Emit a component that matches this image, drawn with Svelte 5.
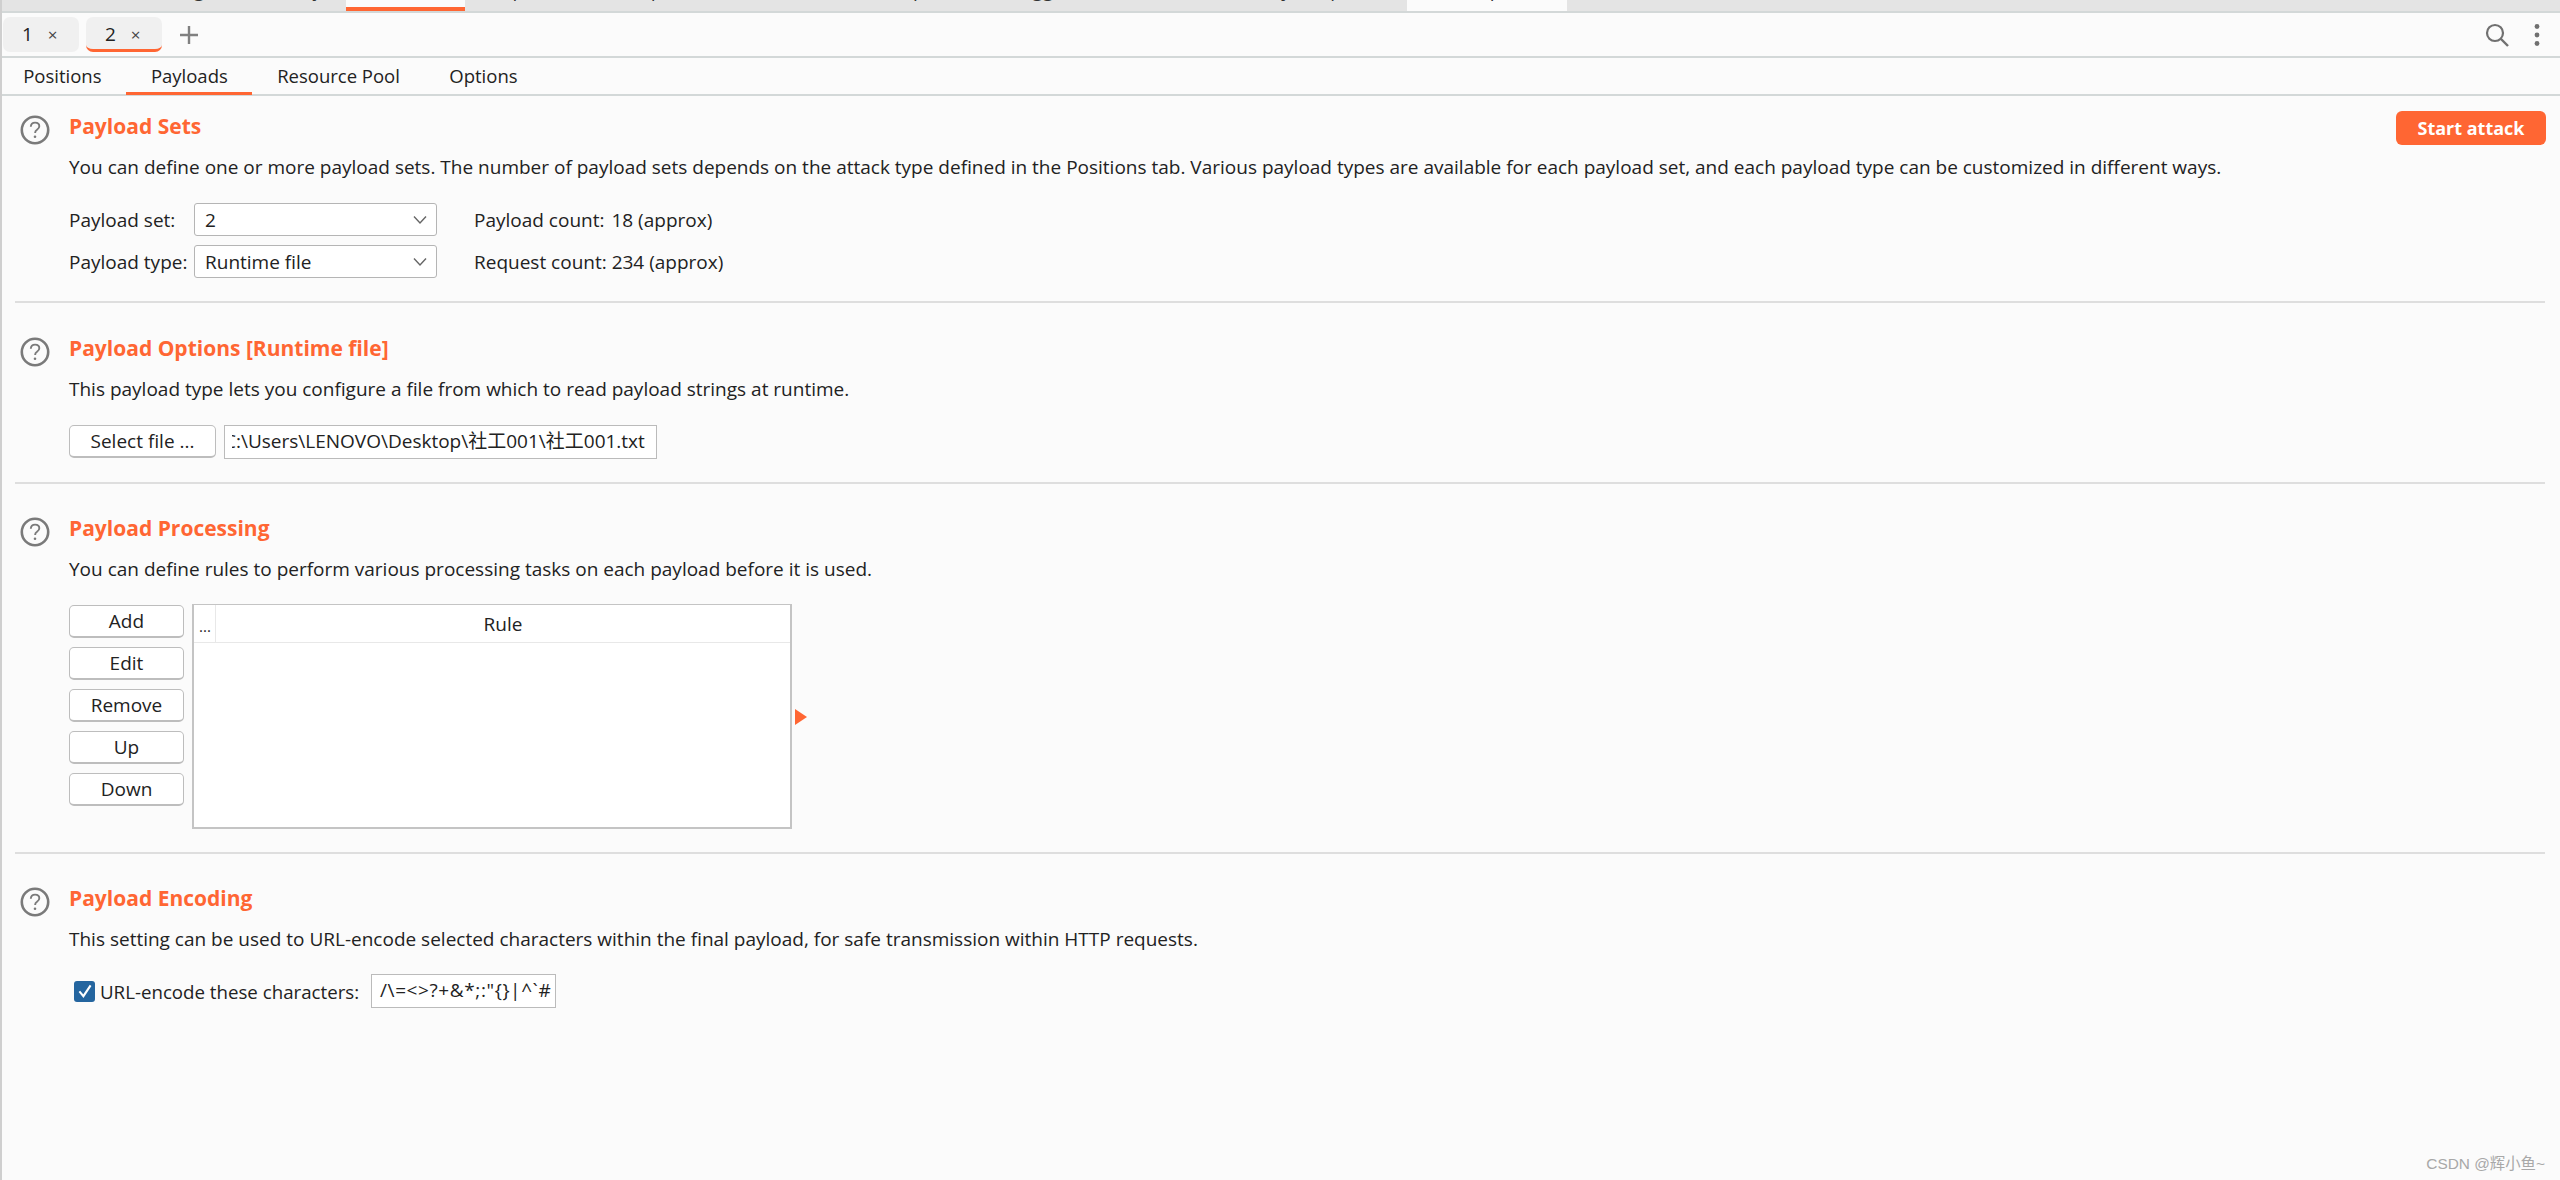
<script>
  const topTabs = [
    { label: 'Dashboard', width: 150, pad: 30 },
    { label: 'Target', width: 105, pad: 15 },
    { label: 'Proxy', width: 91, pad: 17 },
    { label: 'Intruder', width: 119, pad: 26, active: true },
    { label: 'Repeater', width: 130, pad: 25 },
    { label: 'Sequencer', width: 155, pad: 28 },
    { label: 'Decoder', width: 120, pad: 26 },
    { label: 'Comparer', width: 105, pad: 2 },
    { label: 'Logger', width: 150, pad: 36 },
    { label: 'Extender', width: 115, pad: 20 },
    { label: 'Project options', width: 167, pad: 12 },
    { label: 'User options', width: 160, pad: 25, open: true },
    { label: 'Learn', width: 100, pad: 30 }
  ];

  const subTabs = ['Positions', 'Payloads', 'Resource Pool', 'Options'];
  const ruleButtons = ['Add', 'Edit', 'Remove', 'Up', 'Down'];
</script>

{#snippet help()}
  <svg class="help" viewBox="0 0 30 30" width="30" height="30" fill="none">
    <circle cx="15" cy="15" r="13.2" stroke="#7a7a7a" stroke-width="2.6" />
    <path d="M10.8 11.8c.2-2.8 2-4.2 4.3-4.2 2.5 0 4.2 1.5 4.2 3.6 0 1.7-1 2.6-2.3 3.6-1.3.9-1.9 1.6-1.9 3.1" stroke="#7a7a7a" stroke-width="1.9" />
    <circle cx="15" cy="21.8" r="1.3" fill="#7a7a7a" />
  </svg>
{/snippet}

{#snippet chevron()}
  <svg viewBox="0 0 14 10" width="14" height="10" fill="none">
    <path d="M1 1.5l6 6.5 6-6.5" stroke="#666" stroke-width="1.4" />
  </svg>
{/snippet}

<div class="window">
  <nav class="top-tabs">
    {#each topTabs as tab}
      <div class="top-tab" class:active={tab.active} class:open={tab.open} style="width:{tab.width}px;padding-left:{tab.pad}px">
        <span>{tab.label}</span>
      </div>
    {/each}
  </nav>

  <div class="attack-tabs">
    <div class="attack-tab">1 <i>×</i></div>
    <div class="attack-tab current">2 <i>×</i></div>
    <svg class="plus" viewBox="0 0 20 20" width="20" height="20">
      <path d="M10 1v18M1 10h18" stroke="#808080" stroke-width="2.4" />
    </svg>
    <div class="tools">
      <svg viewBox="0 0 24 24" width="24" height="24" fill="none">
        <circle cx="10" cy="10" r="8" stroke="#707070" stroke-width="2.2" />
        <path d="M16 16l7 7" stroke="#707070" stroke-width="2.4" />
      </svg>
      <svg class="dots" viewBox="0 0 6 24" width="6" height="24" fill="#707070">
        <circle cx="3" cy="3.5" r="2.4" />
        <circle cx="3" cy="12" r="2.4" />
        <circle cx="3" cy="20.5" r="2.4" />
      </svg>
    </div>
  </div>

  <div class="sub-tabs">
    {#each subTabs as name, i}
      <div class="sub-tab" class:current={i === 1}>{name}</div>
    {/each}
  </div>

  <main>
    <section class="first">
      {@render help()}
      <div class="body">
        <div class="head">
          <h2>Payload Sets</h2>
          <button class="start">Start attack</button>
        </div>
        <p>You can define one or more payload sets. The number of payload sets depends on the attack type defined in the Positions tab. Various payload types are available for each payload set, and each payload type can be customized in different ways.</p>
        <div class="sets">
          <span>Payload set:</span>
          <div class="combo">2 {@render chevron()}</div>
          <span class="count">Payload count:<span class="gap"></span>18 (approx)</span>
          <span>Payload type:</span>
          <div class="combo">Runtime file {@render chevron()}</div>
          <span class="count">Request count: 234 (approx)</span>
        </div>
      </div>
    </section>

    <section class="options">
      {@render help()}
      <div class="body">
        <h2>Payload Options [Runtime file]</h2>
        <p>This payload type lets you configure a file from which to read payload strings at runtime.</p>
        <div class="file-row">
          <button class="btn select">Select file ...</button>
          <div class="field path"><div class="clip"><span>C:\Users\LENOVO\Desktop\社工001\社工001.txt</span></div></div>
        </div>
      </div>
    </section>

    <section>
      {@render help()}
      <div class="body">
        <h2>Payload Processing</h2>
        <p>You can define rules to perform various processing tasks on each payload before it is used.</p>
        <div class="rules">
          <div class="rule-buttons">
            {#each ruleButtons as name}
              <button class="btn">{name}</button>
            {/each}
          </div>
          <div class="table">
            <div class="thead">
              <div class="col-mark">...</div>
              <div class="col-rule">Rule</div>
            </div>
          </div>
          <div class="arrow"></div>
        </div>
      </div>
    </section>

    <section class="last">
      {@render help()}
      <div class="body">
        <h2>Payload Encoding</h2>
        <p>This setting can be used to URL-encode selected characters within the final payload, for safe transmission within HTTP requests.</p>
        <div class="encode-row">
          <span class="check">
            <svg viewBox="0 0 20 20" width="16" height="16" fill="none">
              <path d="M3 10.5l5 6L17 3" stroke="#fff" stroke-width="2.6" />
            </svg>
          </span>
          <span class="encode-label">URL-encode these characters:</span>
          <div class="field chars">/\=&lt;&gt;?+&amp;*;:"{'{'}{'}'}|^`#</div>
        </div>
      </div>
    </section>
  </main>

  <div class="mark">CSDN @辉小鱼~</div>
</div>

<style>
  :global(body) {
    margin: 0;
    background: #fbfbfb;
  }

  .window {
    position: relative;
    height: 1180px;
    overflow: hidden;
    box-sizing: border-box;
    border-left: 2px solid #cfcfcf;
    margin: 0;
    background: #fbfbfb;
    color: #222;
    font-family: "Open Sans", "Noto Sans CJK SC", sans-serif;
    font-size: 19px;
  }

  .top-tabs {
    display: flex;
    height: 11px;
    margin-left: -2px;
    background: #e4e4e4;
    border-bottom: 2px solid #d3d8d8;
    overflow: hidden;
  }

  .top-tab {
    flex: none;
    box-sizing: border-box;
    height: 11px;
    overflow: hidden;
    white-space: nowrap;
    color: #333;
  }

  .top-tab span {
    display: block;
    margin-top: -23px;
    line-height: 26px;
  }

  .top-tab.active {
    background: #fbfbfb;
    border-bottom: 4px solid #ff6633;
  }

  .top-tab.open {
    background: #fbfbfb;
  }

  .attack-tabs {
    display: flex;
    align-items: center;
    height: 43px;
    padding-left: 1px;
    border-bottom: 2px solid #d3d8d8;
  }

  .attack-tab {
    box-sizing: border-box;
    width: 76px;
    height: 35px;
    margin-right: 7px;
    padding-left: 19px;
    line-height: 34px;
    background: #f0f0f0;
    border-radius: 7px;
    font-size: 19px;
  }

  .attack-tab i {
    margin-left: 10px;
    font-style: normal;
    font-size: 17px;
    color: #444;
  }

  .attack-tab.current {
    border-bottom: 3px solid #ff6633;
  }

  .plus {
    margin-left: 10px;
  }

  .tools {
    display: flex;
    align-items: center;
    gap: 25px;
    margin-left: auto;
    padding-right: 20px;
  }

  .sub-tabs {
    display: flex;
    height: 36px;
    margin-left: -3.5px;
    border-bottom: 2px solid #d3d8d8;
    font-size: 18.5px;
  }

  .sub-tab {
    box-sizing: border-box;
    height: 37px;
    padding: 0 24.7px;
    line-height: 36px;
  }

  .sub-tab.current {
    border-bottom: 3px solid #ff6633;
  }

  section {
    display: flex;
    margin: 0 15px 0 13px;
    padding: 29px 0 24px 5px;
    border-bottom: 2px solid #dedede;
  }

  section.first {
    padding-top: 15px;
    padding-bottom: 23px;
  }

  section.options {
    padding-top: 30px;
    padding-bottom: 23px;
  }

  section.last {
    border-bottom: none;
  }

  .help {
    flex: none;
    margin-top: 4px;
    margin-right: 19px;
  }

  .body {
    flex: 1;
    min-width: 0;
  }

  .head {
    display: flex;
    justify-content: space-between;
    height: 30px;
  }

  h2 {
    margin: 0;
    font-size: 21px;
    line-height: 30px;
    font-weight: 700;
    color: #ff6633;
  }

  p {
    margin: 13px 0 23px;
    line-height: 26px;
    white-space: nowrap;
  }

  button {
    font: inherit;
    color: inherit;
    padding: 0;
  }

  .start {
    width: 150px;
    height: 34px;
    margin-right: -1px;
    border: none;
    border-radius: 6px;
    background: #ff6633;
    color: #fff;
    font-weight: 700;
    font-size: 18px;
  }

  .sets {
    display: grid;
    grid-template-columns: 125px 243px auto;
    row-gap: 9px;
    align-items: center;
    justify-content: start;
  }

  .count {
    margin-left: 37px;
  }

  .gap {
    display: inline-block;
    width: 7px;
  }

  .combo {
    box-sizing: border-box;
    display: flex;
    justify-content: space-between;
    align-items: center;
    height: 33px;
    padding: 0 9px 0 10px;
    background: #fff;
    border: 1px solid #b5b5b5;
    border-radius: 3px;
  }

  .btn {
    box-sizing: border-box;
    height: 33px;
    background: #fff;
    border: 1px solid #bdbdbd;
    border-bottom-width: 2px;
    border-radius: 5px;
  }

  .field {
    box-sizing: border-box;
    height: 34px;
    background: #fff;
    border: 1px solid #bbb;
    line-height: 31px;
    white-space: nowrap;
    overflow: hidden;
  }

  .file-row {
    display: flex;
    gap: 8px;
  }

  .select {
    width: 147px;
  }

  .path {
    width: 433px;
    padding-left: 7px;
  }

  .clip {
    overflow: hidden;
  }

  .clip span {
    display: block;
    margin-left: -8px;
  }

  .rules {
    display: flex;
    margin: -1px 0 -1px;
  }

  .rule-buttons {
    display: flex;
    flex-direction: column;
    gap: 9px;
    width: 115px;
    margin-top: 1px;
    margin-right: 8px;
  }

  .table {
    box-sizing: border-box;
    width: 600px;
    height: 225px;
    background: #fff;
    border: 2px solid #c4c4c4;
    border-top-width: 1px;
  }

  .thead {
    display: flex;
    height: 37px;
    border-bottom: 1px solid #e8e8e8;
  }

  .col-mark {
    box-sizing: border-box;
    width: 22px;
    padding-left: 5px;
    border-right: 1px solid #e8e8e8;
    line-height: 42px;
    font-size: 15px;
  }

  .col-rule {
    flex: 1;
    text-align: center;
    line-height: 39px;
  }

  .arrow {
    align-self: flex-start;
    width: 0;
    height: 0;
    margin: 105px 0 0 3px;
    border-left: 12px solid #ff6633;
    border-top: 8px solid transparent;
    border-bottom: 8px solid transparent;
  }

  .encode-row {
    display: flex;
    align-items: center;
    margin-top: -1px;
    padding-left: 5px;
  }

  .check {
    box-sizing: border-box;
    display: flex;
    align-items: center;
    justify-content: center;
    width: 21px;
    height: 21px;
    background: #24659f;
    border-radius: 3px;
  }

  .encode-label {
    width: 260px;
    margin-left: 5px;
    font-size: 18.7px;
    white-space: nowrap;
  }

  .chars {
    width: 185px;
    margin-left: 11px;
    padding-left: 8px;
    letter-spacing: 0.6px;
  }

  .mark {
    position: absolute;
    right: 15px;
    bottom: 7px;
    color: #a8a8a8;
    font-family: "Liberation Sans", "Noto Sans CJK SC", sans-serif;
    font-size: 15.4px;
  }
</style>
